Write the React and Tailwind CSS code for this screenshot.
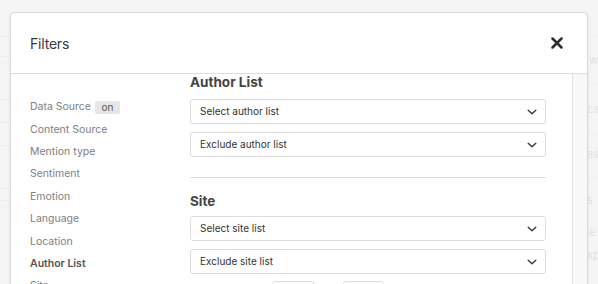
import React from "react";

function Chevron() {
  return (
    <svg width="10" height="6" viewBox="0 0 10 6" fill="none">
      <path d="M1.2 1.2l3.8 3.6 3.8-3.6" stroke="#3a3a3a" strokeWidth="1.4" strokeLinecap="round" strokeLinejoin="round" />
    </svg>
  );
}

function Select({ label }) {
  return (
    <div className="h-[25px] w-full border border-[#dcdcdc] rounded-[3px] bg-white flex items-center justify-between pl-[9px] pr-[8px]">
      <span className="text-[10px] text-[#333]">{label}</span>
      <Chevron />
    </div>
  );
}

const navItems = [
  "Data Source",
  "Content Source",
  "Mention type",
  "Sentiment",
  "Emotion",
  "Language",
  "Location",
  "Author List",
  "Site",
];

export default function App() {
  return (
    <div
      className="relative w-[598px] h-[284px] overflow-hidden bg-[#f5f5f5]"
      style={{ fontFamily: "Inter, 'Noto Sans', sans-serif" }}
    >
      {/* backdrop */}
      <div className="flex justify-between h-full">
        <div className="w-[10px] flex flex-col">
          <div className="h-[37px] border-b border-[#ececec]" />
          <div className="h-[20px] border-b border-[#ececec]" />
          <div className="h-[43px] border-b border-[#ececec]" />
          <div className="h-[23px] border-b border-[#ececec]" />
          <div className="h-[23px] border-b border-[#ececec]" />
          <div className="h-[43px] border-b border-[#ececec]" />
          <div className="h-[12px] border-b border-[#ececec]" />
        </div>
        <div className="w-[11px] flex flex-col text-[11px] text-[#e2e2e2] leading-none">
          <div className="h-[37px] border-b border-[#efefef]" />
          <div className="h-[47px] border-b border-[#efefef] flex items-center pl-[2px]">w</div>
          <div className="h-[51px] border-b border-[#efefef] flex items-center">cs</div>
          <div className="h-[43px] border-b border-[#efefef] flex items-start pt-[14px]">as</div>
          <div className="h-[44px] flex items-center">s</div>
          <div className="h-[20px] flex items-center pl-[2px]">e</div>
          <div className="h-[26px] flex items-center">xp</div>
        </div>
      </div>

      {/* modal */}
      <div className="absolute left-[10px] top-[12px] w-[578px] h-[300px] bg-white border border-[#d9d9d9] rounded-[4px] shadow-[0_1px_4px_rgba(0,0,0,0.06)] flex flex-col">
        <div className="h-[61px] border-b border-[#dedede] flex items-center justify-between pl-[19px] pr-[24px] shrink-0">
          <span className="text-[14px] text-[#3a3a3a] tracking-[-0.2px]">Filters</span>
          <svg width="12" height="12" viewBox="0 0 12 12">
            <path d="M1.5 1.5l9 9M10.5 1.5l-9 9" stroke="#2e2e2e" strokeWidth="2.5" strokeLinecap="round" />
          </svg>
        </div>
        <div className="flex flex-1">
          <div className="w-[179px] pl-[19px] pt-[22px] flex flex-col">
            {navItems.map((item) => (
              <div
                key={item}
                className={
                  "h-[22.4px] flex items-center text-[10.5px] " +
                  (item === "Author List" ? "font-semibold text-[#555]" : "text-[#808080]")
                }
              >
                {item}
                {item === "Data Source" && (
                  <span className="ml-[4px] h-[13px] w-[25px] bg-[#e6e6e6] rounded-[2px] text-[10px] text-[#555] flex items-center justify-center">
                    on
                  </span>
                )}
              </div>
            ))}
          </div>
          <div className="w-[356px] flex flex-col">
            <div className="h-[16px] leading-[16px] text-[13.5px] font-bold text-[#444]">Author List</div>
            <div className="mt-[9px]">
              <Select label="Select author list" />
            </div>
            <div className="mt-[8px]">
              <Select label="Exclude author list" />
            </div>
            <div className="mt-[20px] border-t border-[#dedede]" />
            <div className="mt-[15px] h-[16px] leading-[16px] text-[13.5px] font-bold text-[#444]">Site</div>
            <div className="mt-[7px]">
              <Select label="Select site list" />
            </div>
            <div className="mt-[8px]">
              <Select label="Exclude site list" />
            </div>
            <div className="mt-[7px] flex pl-[82px] gap-[29px]">
              <div className="w-[42px] h-[20px] border border-[#dcdcdc] rounded-[3px]" />
              <div className="w-[41px] h-[20px] border border-[#dcdcdc] rounded-[3px]" />
            </div>
          </div>
          <div className="w-[26px]" />
          <div className="w-[15px] border-l border-[#e4e4e4] bg-[#f8f8f8]" />
        </div>
      </div>
    </div>
  );
}
